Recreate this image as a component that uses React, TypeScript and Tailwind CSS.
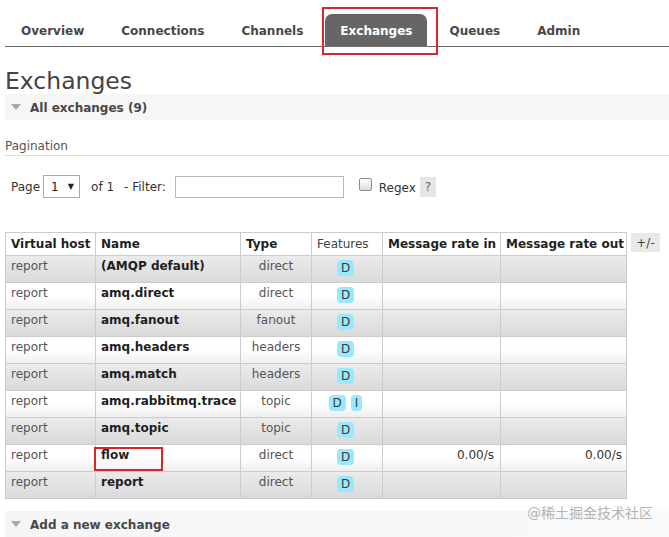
import React from "react";

const tabs = ["Overview", "Connections", "Channels", "Exchanges", "Queues", "Admin"];

type Row = { name: string; type: string; features: string[]; rin?: string; rout?: string };

const rows: Row[] = [
  { name: "(AMQP default)", type: "direct", features: ["D"] },
  { name: "amq.direct", type: "direct", features: ["D"] },
  { name: "amq.fanout", type: "fanout", features: ["D"] },
  { name: "amq.headers", type: "headers", features: ["D"] },
  { name: "amq.match", type: "headers", features: ["D"] },
  { name: "amq.rabbitmq.trace", type: "topic", features: ["D", "I"] },
  { name: "amq.topic", type: "topic", features: ["D"] },
  { name: "flow", type: "direct", features: ["D"], rin: "0.00/s", rout: "0.00/s" },
  { name: "report", type: "direct", features: ["D"] },
];

const cols = "grid grid-cols-[90px_145px_71px_71px_118px_126px]";

function Triangle() {
  return (
    <svg width="10" height="7" viewBox="0 0 10 7" className="shrink-0">
      <path d="M0 0 L10 0 L5 6 Z" fill="#a8a8a8" />
    </svg>
  );
}

export default function App() {
  return (
    <div className="relative w-[669px] h-[537px] overflow-hidden bg-white font-['DejaVu_Sans','Verdana',sans-serif] text-[12px] text-[#444]">
      {/* Nav */}
      <div className="ml-[5px] pt-[14px] pl-[1px] border-b border-[#6a6a6a] flex gap-[7px]">
        {tabs.map((t) => {
          const active = t === "Exchanges";
          return (
            <div
              key={t}
              className={
                "relative h-[32px] px-[15px] pt-[2px] flex items-center font-bold leading-[15px] " +
                (active ? "bg-[#666666] text-white rounded-t-[7px]" : "text-[#484848]")
              }
            >
              {t}
              {active && (
                <div className="absolute left-[-3px] top-[-7px] w-[116px] h-[48px] border-2 border-[#d9262e] pointer-events-none" />
              )}
            </div>
          );
        })}
      </div>

      <div className="pl-[5px]">
        {/* Title */}
        <div className="mt-[22px] text-[23.5px] leading-[25px] text-[#444]">Exchanges</div>

        {/* All exchanges band */}
        <div className="h-[26px] bg-[#f6f6f6] flex items-center pl-[6px] pt-[1px] gap-[9px]">
          <Triangle />
          <span className="font-bold text-[#484848]">All exchanges (9)</span>
        </div>

        {/* Pagination */}
        <div className="mt-[19px] leading-[15px] pb-[1px] border-b border-[#dddddd] text-[#555]">Pagination</div>

        <div className="mt-[19px] h-[23px] flex items-center pl-[6px] text-[#333]">
          <span>Page</span>
          <div className="ml-[3px] w-[37px] h-[23px] border border-[#a9a9a9] flex items-center pl-[7px] text-[#222]">
            <span>1</span>
            <span className="ml-[9px] text-[8px]">▼</span>
          </div>
          <span className="ml-[11px]">of 1</span>
          <span className="ml-[10px]">- Filter:</span>
          <div className="ml-[9px] w-[169px] h-[22px] border border-[#b8b8b8] bg-white" />
          <div className="ml-[15px] w-[13px] h-[13px] rounded-[2px] border border-[#8f8f8f] bg-linear-to-b from-[#ffffff] to-[#dedede] -mt-[4px]" />
          <span className="ml-[7px] mt-[2px]">Regex</span>
          <div className="ml-[4px] mt-[1px] w-[16px] h-[20px] bg-[#e6e6e6] flex items-center justify-center text-[#666]">?</div>
        </div>

        {/* Table */}
        <div className="mt-[34px] flex items-start">
          <div className="border-l border-t border-[#cccccc]">
            <div className={cols + " h-[23px] border-b border-[#cccccc] bg-white"}>
              {["Virtual host", "Name", "Type", "Features", "Message rate in", "Message rate out"].map((h) => (
                <div
                  key={h}
                  className={
                    "border-r border-[#cccccc] flex items-center pl-[5px] leading-[15px] " +
                    (h === "Features" ? "font-normal text-[#444]" : "font-bold text-[#1f1f1f]")
                  }
                >
                  {h}
                </div>
              ))}
            </div>
            {rows.map((r, i) => (
              <div
                key={r.name}
                className={
                  cols +
                  " h-[27px] border-b border-[#cccccc] bg-linear-to-b " +
                  (i % 2 === 0 ? "from-[#ebebeb] to-[#dadada]" : "from-[#ffffff] via-[#ffffff] to-[#efefef]")
                }
              >
                <div className="border-r border-[#cccccc] pl-[5px] pt-[3px] leading-[15px] text-[#555]">report</div>
                <div className="relative border-r border-[#cccccc] pl-[5px] pt-[3px] leading-[15px] font-bold text-[#1f1f1f]">
                  {r.name}
                  {r.name === "flow" && (
                    <div className="absolute left-[-2px] top-[2px] w-[69px] h-[24px] border-2 border-[#d9262e] pointer-events-none" />
                  )}
                </div>
                <div className="border-r border-[#cccccc] pt-[3px] leading-[15px] text-center text-[#555]">{r.type}</div>
                <div className="border-r border-[#cccccc] pt-[4px] flex justify-center items-start gap-[5px] pr-[3px]">
                  {r.features.map((f) => (
                    <span
                      key={f}
                      className="h-[16px] leading-[16px] px-[4px] rounded-[4px] bg-[#99e8fd] text-[#3a3a3a]"
                    >
                      {f}
                    </span>
                  ))}
                </div>
                <div className="border-r border-[#cccccc] pt-[3px] pr-[6px] leading-[15px] text-right text-[#333]">{r.rin ?? ""}</div>
                <div className="border-r border-[#cccccc] pt-[3px] pr-[4px] leading-[15px] text-right text-[#333]">{r.rout ?? ""}</div>
              </div>
            ))}
          </div>
          <div className="ml-[4px] mt-[1px] w-[29px] h-[19px] bg-[#e9e9e9] flex items-center justify-center text-[#444]">+/-</div>
        </div>

        {/* Add new exchange band */}
        <div className="mt-[12px] h-[27px] bg-linear-to-r from-[#f5f5f5] to-[#f9f9f9] flex items-center pl-[6px] gap-[9px]">
          <Triangle />
          <span className="font-bold text-[#484848]">Add a new exchange</span>
        </div>
      </div>

      {/* Watermark */}
      <div className="absolute left-[527px] top-[503px] text-[14px] leading-[20px] text-[#b4b4b4] font-['DejaVu_Sans','Noto_Sans_CJK_SC',sans-serif]">
        @稀土掘金技术社区
      </div>
    </div>
  );
}
